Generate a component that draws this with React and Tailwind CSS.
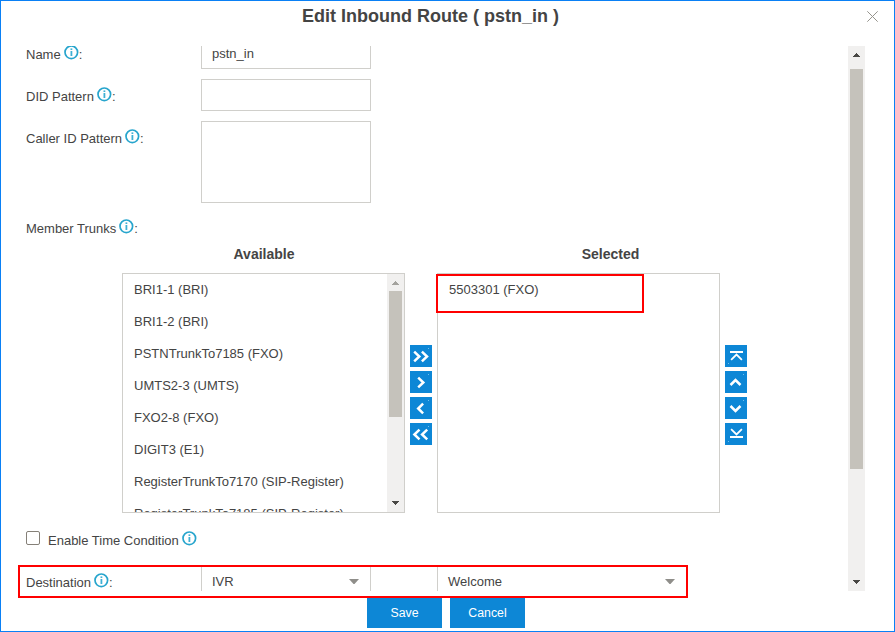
import React from "react";

function Info({ className = "" }) {
  return (
    <svg className={`h-[15px] w-[15px] shrink-0 ${className}`} viewBox="0 0 15 15" fill="none">
      <circle cx="7.3" cy="7.3" r="6.3" stroke="#27a5cd" strokeWidth="1.7" />
      <path d="M7.4 6V11" stroke="#3fb0d4" strokeWidth="1.8" />
      <path d="M7.4 3.4V5" stroke="#3fb0d4" strokeWidth="1.8" />
    </svg>
  );
}

function Label({ children, colon = true }) {
  return (
    <div className="flex h-[15px] items-start">
      <span className="whitespace-nowrap leading-[15px]">{children}</span>
      <Info className="ml-[3px] -mt-[2px]" />
      {colon && <span className="leading-[15px]">:</span>}
    </div>
  );
}

function Triangle({ up = false, color = "#484744" }) {
  return (
    <svg width="7" height="4" viewBox="0 0 7 4" fill={color} shapeRendering="crispEdges">
      {up ? <path d="M3 0h1v1h1v1h1v1h1v1H0V3h1V2h1V1h1z" /> : <path d="M0 0h7v1H6v1H5v1H4v1H3V3H2V2H1V1H0z" />}
    </svg>
  );
}

function SelectArrow() {
  return (
    <svg width="10" height="5" viewBox="0 0 10 5" fill="#8f8e8a">
      <path d="M0 0h10L5.5 5h-1z" />
    </svg>
  );
}

const glyphs = {
  allRight: "M4.2 6.7L9.3 11.5 4.2 16.3M11.9 6.7l5.1 4.8-5.1 4.8",
  right: "M8.2 6.7l5.1 4.8-5.1 4.8",
  left: "M13.1 6.7L8.2 11.5l4.9 4.8",
  allLeft: "M9.5 6.7L4.4 11.5l5.1 4.8M17.2 6.7l-5.1 4.8 5.1 4.8",
  up: "M5.5 14L10.5 9l5 5",
  down: "M5.5 9l5 5 5-5",
};

function MoveButton({ name }) {
  const edge = name === "top" || name === "bottom";
  return (
    <button className="h-[22px] w-[22px] bg-[#0d87d6]">
      <svg width="22" height="22" viewBox="0 0 22 22" fill="none" stroke="#fff">
        {name === "top" && (
          <>
            <path d="M5 7h13" strokeWidth="2" />
            <path d="M6.1 14.8l5.4-5.2 5.4 5.2" strokeWidth="1.8" />
          </>
        )}
        {name === "bottom" && (
          <>
            <path d="M5 14h13" strokeWidth="2" />
            <path d="M6.1 6.2l5.4 5.2 5.4-5.2" strokeWidth="1.8" />
          </>
        )}
        {glyphs[name] && <path d={glyphs[name]} strokeWidth="2.5" />}
        <rect x={edge ? 3 : 18} y={edge ? 18 : 3} width="1" height="1" fill="#6fc0ee" stroke="none" />
      </svg>
    </button>
  );
}

const trunks = [
  "BRI1-1 (BRI)",
  "BRI1-2 (BRI)",
  "PSTNTrunkTo7185 (FXO)",
  "UMTS2-3 (UMTS)",
  "FXO2-8 (FXO)",
  "DIGIT3 (E1)",
  "RegisterTrunkTo7170 (SIP-Register)",
  "RegisterTrunkTo7185 (SIP-Register)",
];

export default function App() {
  return (
    <div className="relative flex h-[632px] w-[895px] flex-col overflow-hidden border border-[#0a80f5] bg-white font-['Liberation_Sans',Arial,sans-serif] text-[13px] text-[#444]">
      <header className="flex h-[45px] shrink-0 justify-between">
        <h1 className="ml-[301px] mt-[3px] whitespace-nowrap text-lg font-bold leading-6">Edit Inbound Route ( pstn_in )</h1>
        <svg className="mr-[16px] mt-[10px]" width="11" height="11" viewBox="0 0 11 11" stroke="#96948d" strokeWidth="1">
          <path d="M.3.3l10.4 10.4M10.7.3L.3 10.7" />
        </svg>
      </header>

      <div className="flex h-[545px] shrink-0 overflow-hidden">
        <main className="h-[545px] w-[847px] overflow-hidden pl-[25px]">
          <div className="-mt-[9px] flex h-[42px]">
            <div className="w-[175px] pt-[10px]"><Label>Name</Label></div>
            <div className="flex h-8 w-[170px] items-center border border-[#d0cfcb] pl-[10px] pb-px pt-0.5">pstn_in</div>
          </div>
          <div className="flex h-[42px]">
            <div className="w-[175px] pt-[10px]"><Label>DID Pattern</Label></div>
            <div className="h-8 w-[170px] border border-[#d0cfcb]" />
          </div>
          <div className="flex h-[90px]">
            <div className="w-[175px] pt-[10px]"><Label>Caller ID Pattern</Label></div>
            <div className="h-[82px] w-[170px] border border-[#d0cfcb]" />
          </div>
          <div className="h-8 pt-[10px]"><Label>Member Trunks</Label></div>

          <div className="flex h-[30px] pl-[96px] pt-[3px] text-sm font-bold leading-4">
            <div className="w-[283px] pl-px text-center">Available</div>
            <div className="ml-8 w-[346px] pl-px text-center">Selected</div>
          </div>
          <div className="flex h-[240px] pl-[96px]">
            <div className="flex w-[283px] border border-[#d0cfcb]">
              <ul className="h-[238px] flex-1 overflow-hidden pl-[11px]">
                {trunks.map((t) => (
                  <li key={t} className="h-8 whitespace-nowrap leading-8">{t}</li>
                ))}
              </ul>
              <div className="flex w-[17px] flex-col items-center bg-[#f1f0ef]">
                <div className="flex h-[17px] items-start pt-[7px]"><Triangle up color="#a3a29d" /></div>
                <div className="h-[126px] w-[13px] bg-[#c5c2bb]" />
                <div className="mt-auto flex h-[11px] items-start"><Triangle /></div>
              </div>
            </div>
            <div className="flex w-8 flex-col items-center gap-1 pt-[72px]">
              <MoveButton name="allRight" />
              <MoveButton name="right" />
              <MoveButton name="left" />
              <MoveButton name="allLeft" />
            </div>
            <div className="relative w-[283px] border border-[#d0cfcb] pl-[11px]">
              <div className="h-8 leading-8">5503301 (FXO)</div>
              <div className="absolute -left-[2px] top-0 h-[39px] w-[208px] border-2 border-[#f00]" />
            </div>
            <div className="ml-[5px] flex w-[22px] flex-col gap-1 pt-[72px]">
              <MoveButton name="top" />
              <MoveButton name="up" />
              <MoveButton name="down" />
              <MoveButton name="bottom" />
            </div>
          </div>

          <div className="flex h-[52px] pt-[18px]">
            <div className="mr-2 h-[14px] w-[14px] rounded-[2px] border border-[#858078]" />
            <div className="pt-[2px]"><Label colon={false}>Enable Time Condition</Label></div>
          </div>
          <div className="flex h-8">
            <div className="w-[175px] pt-[10px]"><Label>Destination</Label></div>
            <div className="flex w-[170px] items-center justify-between border border-[#d0cfcb] pl-[10px] pr-[11px]">
              <span className="pt-[2px]">IVR</span>
              <SelectArrow />
            </div>
            <div className="ml-[66px] flex w-[250px] items-center justify-between border border-[#d0cfcb] pl-[10px] pr-[11px]">
              <span className="pt-[2px]">Welcome</span>
              <SelectArrow />
            </div>
          </div>
        </main>
        <div className="flex w-[17px] flex-col items-center bg-[#f1f0ef]">
          <div className="flex h-[23px] pt-[7px]"><Triangle up /></div>
          <div className="h-[400px] w-[13px] bg-[#c5c2bb]" />
          <div className="mt-auto flex h-[11px]"><Triangle /></div>
        </div>
      </div>

      <footer className="mt-[7px] flex gap-2 pl-[366px] text-[12.3px] text-white">
        <button className="h-[30px] w-[75px] bg-[#0d87d6]">Save</button>
        <button className="h-[30px] w-[75px] bg-[#0d87d6]">Cancel</button>
      </footer>
      <div className="absolute left-[17px] top-[564px] h-[33px] w-[670px] border-2 border-[#f00]" />
    </div>
  );
}
